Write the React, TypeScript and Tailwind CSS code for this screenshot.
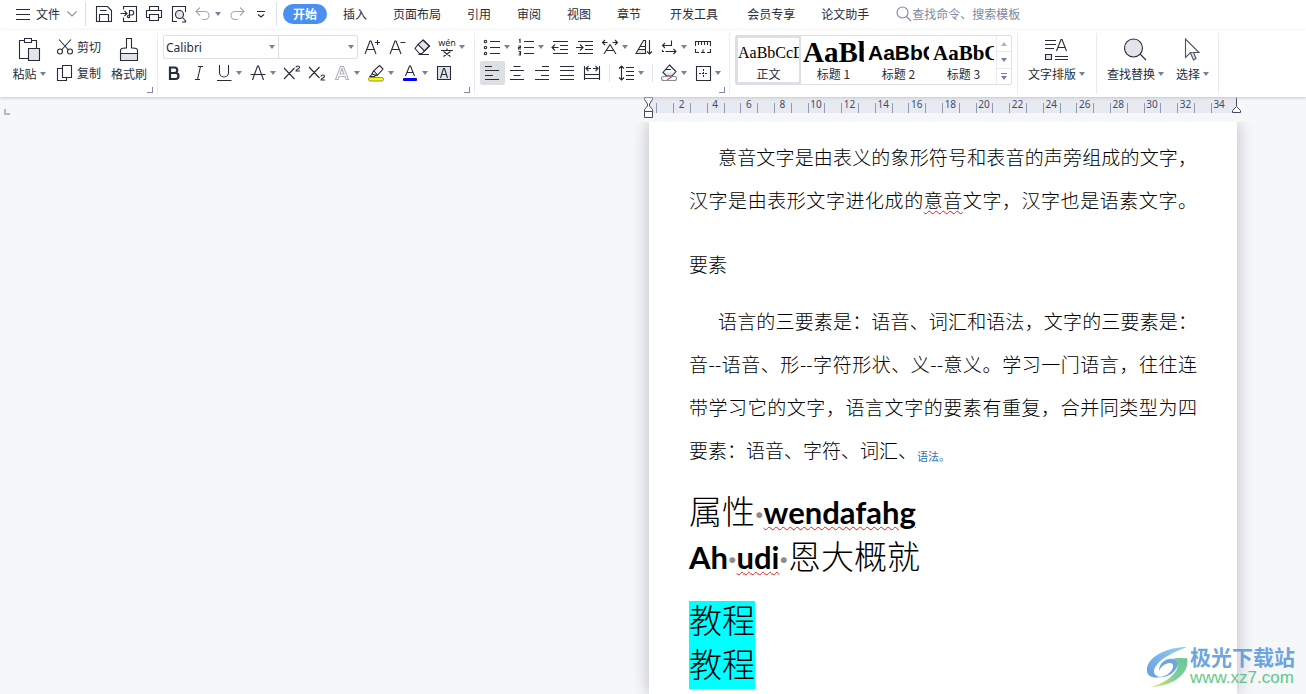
import React from "react"

type IconProps = {
    children: React.ReactNode
    size?: number
    className?: string
}

const Icon = ({ children, size = 18, className = "" }: IconProps) => (
    <svg
        width={size}
        height={size}
        viewBox={`0 0 ${size} ${size}`}
        fill="none"
        stroke="currentColor"
        strokeWidth="1.1"
        className={`shrink-0 ${className}`}
        aria-hidden="true"
    >
        {children}
    </svg>
)

const Caret = ({ className = "" }: { className?: string }) => (
    <svg width="6" height="4" viewBox="0 0 6 4" className={`shrink-0 fill-[#7480a0] ${className}`} aria-hidden="true">
        <path d="M0 0h6L3 4z" />
    </svg>
)

const Separator = () => <div className="my-[3px] w-px shrink-0 bg-[#e9ebef]" />

const Launcher = () => (
    <button aria-label="更多设置" className="block size-[6px] border-r border-b border-[#7e8ba8]" />
)

type ToolProps = {
    label: string
    children: React.ReactNode
    menu?: boolean
    active?: boolean
}

const Tool = ({ label, children, menu, active }: ToolProps) => (
    <button
        aria-label={label}
        className={`flex h-6 shrink-0 items-center rounded-xs pl-[3px] ${menu ? "w-[34px] gap-[3px]" : "w-[25px]"} ${active ? "bg-[#dce0e4]" : ""}`}
    >
        {children}
        {menu && <Caret />}
    </button>
)

const tabs = ["插入", "页面布局", "引用", "审阅", "视图", "章节"]
const extraTabs = ["开发工具", "会员专享"]

const TitleBar = () => (
    <header className="flex h-[30px] items-center pb-0.5 pl-[15px]">
        <button className="flex items-center">
            <Icon size={16}><path d="M1 3.500h14M1 8.500h14M1 13.500h14" /></Icon>
            <span className="ml-[5px]">文件</span>
            <Icon size={10} className="ml-[7px] text-[#8a8f99]"><path d="M.5 2.500l4.500 4.500 4.500-4.500" /></Icon>
        </button>
        <div className="ml-2 h-6 w-px bg-[#dcdfe5]" />
        <div className="ml-[9px] flex w-[181px] items-center">
            <button aria-label="保存" className="w-[25px]">
                <Icon><path d="M1.500 1.500h11l4 4v11h-15zM4.500 16.500v-7h9v7M5 5.500h6.500" /></Icon>
            </button>
            <button aria-label="输出为PDF" className="w-[25px]">
                <Icon><path d="M3.500 4.500v-3h13v15h-13v-4M.500 8.500h6M4.500 6l2.500 2.500L4.500 11M9.500 13V5.500h2c3 0 3 4.500 0 4.500H9c-1.500 0-2 2-1 2.500s1.500-.5 1.500-1.500" /></Icon>
            </button>
            <button aria-label="打印" className="w-[25px]">
                <Icon><path d="M4.500 5.500v-4h9v4M4.500 12.500h-3v-7h15v7h-3M4.500 9.500h9v6h-9z" /></Icon>
            </button>
            <button aria-label="打印预览" className="w-[25px]">
                <Icon>
                    <path d="M7 16.500H2.500v-15h13V7M15.500 15.500v1.500H12" />
                    <circle cx="9.500" cy="9.500" r="4" fill="#e2e4e9" />
                    <path d="M12.500 12.500l3.500 4" />
                </Icon>
            </button>
            <button aria-label="撤销" className="flex w-[34px] items-center text-[#a5a9b1]">
                <Icon><path d="M5 2.500l-4 4 4 4M1 6.500h9a4 4 0 010 8H7" /></Icon>
                <Caret className="ml-[2px]" />
            </button>
            <button aria-label="恢复" className="w-[26px] text-[#a5a9b1]">
                <Icon><path d="M11 2.500l4 4-4 4M15 6.500H6a4 4 0 000 8h3" /></Icon>
            </button>
            <button aria-label="自定义快速访问工具栏">
                <Icon size={10} className="ml-px"><path d="M1 2.500h8M2 5.500l3 2.500 3-2.500" /></Icon>
            </button>
        </div>
        <div className="h-6 w-px bg-[#dcdfe5]" />
        <nav className="ml-[6px] flex items-center">
            <button className="h-5 w-11 rounded-full bg-[#4a90f3] font-bold text-white">开始</button>
            <div className="ml-[3px] flex">
                {tabs.map((tab) => (
                    <button key={tab} className="px-[13px]">{tab}</button>
                ))}
            </div>
            {extraTabs.map((tab) => (
                <button key={tab} className="ml-[3px] px-[13px]">{tab}</button>
            ))}
            <button className="px-[13px]">论文助手</button>
        </nav>
        <label className="ml-[14px] flex items-center text-[#7d88a3]">
            <Icon size={16}>
                <circle cx="6.500" cy="6.500" r="5.500" />
                <path d="M10.500 10.500l4.500 4.500" />
            </Icon>
            <input
                aria-label="搜索"
                placeholder="查找命令、搜索模板"
                className="w-32 bg-transparent outline-none placeholder:text-[#7d88a3]"
            />
        </label>
    </header>
)

const ClipboardGroup = () => (
    <div className="flex h-[67px] w-[157px] shrink-0 pt-[5px]">
        <button className="ml-3 flex w-[34px] flex-col items-center">
            <Icon size={24} className="mt-[2px]">
                <path d="M7.500 3.500h-5v18h9M14.500 3.500h5v9M7.500 1.500h7v4h-7z" />
                <path d="M11.500 11.500h11v12h-11z" fill="#e2e4e9" />
            </Icon>
            <span className="mt-1 flex items-center gap-[3px] leading-[18px] whitespace-nowrap">粘贴<Caret /></span>
        </button>
        <div className="ml-[10px] flex w-[46px] flex-col gap-[2px]">
            <button className="flex h-6 items-center gap-[3px] whitespace-nowrap">
                <Icon>
                    <path d="M3 1.500l9.500 10.500M15 1.500L5.500 12" />
                    <circle cx="4" cy="13.500" r="2.500" />
                    <circle cx="14" cy="13.500" r="2.500" />
                </Icon>
                剪切
            </button>
            <button className="flex h-6 items-center gap-[3px] whitespace-nowrap">
                <Icon><path d="M6.500 1.500h9v12h-9zM6.500 4.500h-5v12h9v-3" /></Icon>
                复制
            </button>
        </div>
        <button className="ml-[9px] flex w-9 flex-col items-center whitespace-nowrap">
            <Icon size={24} className="mt-[2px]">
                <path d="M3.500 16.500h17v7h-17z" fill="#e2e4e9" />
                <path d="M3.500 16.500v-3c0-2 1-2 6-2.500V1.500h5V11c5 .5 6 .5 6 2.500v3" />
            </Icon>
            <span className="mt-1 leading-[18px]">格式刷</span>
        </button>
        <div className="mb-[4px] flex items-end"><Launcher /></div>
    </div>
)

const FontGroup = () => (
    <div className="w-[316px] shrink-0 pt-[5px] pl-1">
        <div className="flex">
            <div className="ml-px flex h-6 w-[195px] rounded-xs border border-[#dcdfe5]">
                <label className="flex w-[115px] items-center border-r border-[#dcdfe5]">
                    <select
                        aria-label="字体"
                        className="min-w-0 flex-1 appearance-none pt-px pl-[2px] font-['Noto_Sans','Noto_Sans_CJK_SC',sans-serif] text-[12px] outline-none"
                    >
                        <option>Calibri</option>
                    </select>
                    <Caret className="mr-[3px]" />
                </label>
                <label className="flex flex-1 items-center">
                    <select aria-label="字号" className="min-w-0 flex-1 appearance-none outline-none">
                        <option></option>
                    </select>
                    <Caret className="mr-[3px]" />
                </label>
            </div>
            <div className="ml-[2px] flex">
                <Tool label="增大字号">
                    <Icon><path d="M2 16L7 3h1l5 13M4 11.500h7M12 4.500h5M14.500 2v5" /></Icon>
                </Tool>
                <Tool label="减小字号">
                    <Icon><path d="M2 16L7 3h1l5 13M4 11.500h7M12.500 4.500h5" /></Icon>
                </Tool>
                <Tool label="清除格式">
                    <Icon>
                        <path d="M10 2l6.500 6-5 5L5 6.500z" fill="#e2e4e9" />
                        <path d="M10 2l6.500 6-7.500 7.500H6.500L2 10.500 5 6.500M5.500 16.500H16" />
                    </Icon>
                </Tool>
                <Tool label="拼音指南" menu>
                    <span className="flex w-[18px] flex-col items-center">
                        <span className="font-['Noto_Sans',sans-serif] text-[9px] leading-[11px]">wén</span>
                        <svg width="12" height="9" viewBox="0 0 12 9" fill="none" stroke="currentColor" strokeWidth="1.2" aria-hidden="true">
                            <path d="M0 2.500h12M6 .5v2M2.500 3.500l7 5M9.500 3.500l-7 5" />
                        </svg>
                    </span>
                </Tool>
            </div>
        </div>
        <div className="mt-[2px] flex">
            <Tool label="加粗">
                <Icon><path d="M5 3.500h4.500a2.750 2.750 0 010 5.500H5zM5 9h5.500a3 3 0 010 6H5z" strokeWidth="2.200" /></Icon>
            </Tool>
            <Tool label="倾斜">
                <Icon><path d="M8 2.500h5M5 15.500h5M10.500 2.500l-3 13" /></Icon>
            </Tool>
            <Tool label="下划线" menu>
                <Icon><path d="M4.500 1v7.500a4.500 4.500 0 009 0V1M2 16.500h14.500" /></Icon>
            </Tool>
            <Tool label="删除线" menu>
                <Icon><path d="M3.500 16L8.500 2h1l5 14M1.500 10.500h15" /></Icon>
            </Tool>
            <Tool label="上标">
                <Icon><path d="M1 4l10.500 11M11.500 4L1 15M13 3.500c0-2 3.500-2 3.500 0 0 1.200-3.500 2-3.500 3.500h4" /></Icon>
            </Tool>
            <Tool label="下标">
                <Icon><path d="M1 3l10.500 11M11.500 3L1 14M13 12.500c0-2 3.500-2 3.500 0 0 1.200-3.500 2-3.500 3.500h4" /></Icon>
            </Tool>
            <Tool label="文字效果" menu>
                <Icon className="text-[#b0b3b9]"><path d="M2.500 15.500l5-13h3l5 13H13l-1-3H6l-1 3zM7 10h4L9 4.500z" /></Icon>
            </Tool>
            <Tool label="突出显示" menu>
                <Icon>
                    <path d="M12.500 1.500l3.500 3.500-6 6.500-5-1.500 1.500-3zM5 10l-2 2.500h4.500L9 11M7 7l3.500 4" />
                    <rect x="1.500" y="13.500" width="15" height="3.500" rx="1.700" fill="#ffff00" stroke="#8a8a60" strokeWidth="1" />
                </Icon>
            </Tool>
            <Tool label="字体颜色" menu>
                <Icon>
                    <path d="M4.500 12L8.500 2h1l4 10M6 8.500h6" />
                    <rect x="2" y="14" width="14" height="3" rx="1" fill="#0000ff" stroke="none" />
                </Icon>
            </Tool>
            <Tool label="字符底纹">
                <Icon>
                    <path d="M2.500 2.500h13v13h-13z" fill="#e2e4e9" />
                    <path d="M5.500 14l3-9.500h1l3 9.500M6.500 10.500h5" />
                </Icon>
            </Tool>
        </div>
        <div className="mt-[2px] mr-[4px] flex justify-end"><Launcher /></div>
    </div>
)

const ParagraphGroup = () => (
    <div className="w-[254px] shrink-0 pt-[5px] pl-[5px]">
        <div className="flex">
            <Tool label="项目符号" menu>
                <Icon>
                    <path d="M7 3.500h10M7 9.500h10M7 15.500h10" />
                    <circle cx="2.500" cy="3.500" r="1.200" />
                    <circle cx="2.500" cy="9.500" r="1.200" />
                    <circle cx="2.500" cy="15.500" r="1.200" />
                </Icon>
            </Tool>
            <Tool label="编号" menu>
                <Icon>
                    <path d="M7 3.500h10M7 9.500h10M7 15.500h10" />
                    <path d="M2 2l1-.5V5M1.500 8h2v1.500h-2V11h2.500M1.500 13.500h2v3.500h-2M2 15.200h1.500" />
                </Icon>
            </Tool>
            <Tool label="减少缩进量">
                <Icon><path d="M2 3.500h15M9 7.500h8M9 11.500h8M2 15.500h15M7.500 9.500H1M4 6.500l-3 3 3 3" /></Icon>
            </Tool>
            <Tool label="增加缩进量">
                <Icon><path d="M2 3.500h15M9 7.500h8M9 11.500h8M2 15.500h15M0 9.500h7M4 6.500l3 3-3 3" /></Icon>
            </Tool>
            <Tool label="中文版式" menu>
                <Icon><path d="M1.500 4.500h5M4 2L1.500 4.500 4 7M11.500 4.500h5M14 2l2.500 2.500L14 7M3 16l6-9.500L15 16M5.500 12.500h7" /></Icon>
            </Tool>
            <Tool label="排序">
                <Icon>
                    <path d="M4 11h6v4.500H2z" fill="#e2e4e9" stroke="none" />
                    <path d="M1 15.500L8.500 2.500h2v13zM5 8.500h5.500M3.500 11.500h7M14.500 2v14M12 13.500l2.500 2.500 2.500-2.500" />
                </Icon>
            </Tool>
            <Tool label="换行符" menu>
                <Icon><path d="M11.500 2.500v5H2.500M5 5L2.500 7.500 5 10M5.500 13.500H16M13.500 11l2.500 2.500L13.500 16M2.500 12v1.500H4" /></Icon>
            </Tool>
            <Tool label="标尺">
                <Icon><path d="M1.500 8V3.500h15V8M4.500 3.500V7M7.500 3.500V7M10.500 3.500V7M13.500 3.500V7M1.500 11v3.500H5M16.500 11v3.500H13M7 14.500h4M9 11.500v3" /></Icon>
            </Tool>
        </div>
        <div className="mt-[2px] flex">
            <Tool label="左对齐" active>
                <Icon><path d="M2 2.500h7M2 6.500h14M2 11.500h8M2 15.500h14" /></Icon>
            </Tool>
            <Tool label="居中">
                <Icon><path d="M5.500 2.500h7M2 6.500h14M5.500 11.500h7M2 15.500h14" /></Icon>
            </Tool>
            <Tool label="右对齐">
                <Icon><path d="M9 2.500h7M2 6.500h14M8 11.500h8M2 15.500h14" /></Icon>
            </Tool>
            <Tool label="两端对齐">
                <Icon><path d="M2 2.500h14M2 6.500h14M2 11.500h14M2 15.500h14" /></Icon>
            </Tool>
            <Tool label="分散对齐">
                <Icon><path d="M1.500 2v14M16.500 2v14M3 4.500h5M5.500 2L3 4.500 5.500 7M10 4.500h5M12.500 2L15 4.500 12.500 7M2 10.500h14M2 14.500h14" /></Icon>
            </Tool>
            <div className="mx-1 my-[3px] w-px bg-[#dfe2e8]" />
            <Tool label="行距" menu>
                <Icon><path d="M4.500 2v14M2 4.500L4.500 2 7 4.500M2 13.500L4.500 16 7 13.500M9 3.500h8M9 7.500h8M9 11.500h8M9 15.500h8" /></Icon>
            </Tool>
            <div className="mx-1 my-[3px] w-px bg-[#dfe2e8]" />
            <Tool label="底纹颜色" menu>
                <Icon>
                    <path d="M4 8.500h12l-3.500 3.500h-6z" fill="#e2e4e9" stroke="none" />
                    <path d="M9.500 1L16 7.500l-4 4.500H6.500L3 8.500zM5 5.500h6" />
                    <rect x="1.500" y="12.500" width="15" height="4" rx="2" fill="#fff" stroke="#8a8d94" />
                    <path d="M7 16l5-3.500" stroke="#e05050" />
                </Icon>
            </Tool>
            <Tool label="边框" menu>
                <Icon><path d="M2.500 2.500h14v14h-14z" /><path d="M5 9.500h9M9.500 5v9" strokeDasharray="2 1" /></Icon>
            </Tool>
        </div>
        <div className="mt-[2px] mr-[4px] flex justify-end"><Launcher /></div>
    </div>
)

type StyleItem = {
    name: string
    sample: string
    font: string
}

const styleItems: StyleItem[] = [
    { name: "正文", sample: "AaBbCcDd", font: "font-['Liberation_Serif',serif] text-[16px]" },
    { name: "标题 1", sample: "AaBb", font: "font-['Liberation_Serif',serif] text-[29px] font-bold" },
    { name: "标题 2", sample: "AaBbC", font: "font-['Liberation_Sans',sans-serif] text-[21px] font-bold" },
    { name: "标题 3", sample: "AaBbC", font: "font-['Liberation_Serif',serif] text-[21px] font-bold" },
]

const StylesGroup = () => (
    <div className="w-[287px] shrink-0 pt-[5px] pl-[5px]">
        <div className="flex h-[50px] w-[277px] rounded-xs border border-[#dcdfe5]">
            {styleItems.map((item, i) => (
                <button
                    key={item.name}
                    className={`flex w-[65px] flex-col border-2 ${i === 0 ? "border-[#dcdfe5]" : "border-transparent"}`}
                >
                    <span className={`flex h-7 w-full items-center overflow-hidden pt-px whitespace-nowrap text-black ${item.font}`}>
                        {item.sample}
                    </span>
                    <span className="w-full text-center leading-[16px]">{item.name}</span>
                </button>
            ))}
            <div className="flex flex-1 flex-col divide-y divide-[#e9ebef] border-l border-[#e9ebef]">
                <button aria-label="上一行" className="flex flex-1 items-center justify-center">
                    <Caret className="rotate-180 opacity-60" />
                </button>
                <button aria-label="下一行" className="flex flex-1 items-center justify-center"><Caret /></button>
                <button aria-label="更多样式" className="flex flex-1 flex-col items-center justify-center gap-[2px]">
                    <span className="h-px w-[6px] bg-[#7480a0]" />
                    <Caret />
                </button>
            </div>
        </div>
    </div>
)

type BigToolProps = {
    label: string
    children: React.ReactNode
}

const BigTool = ({ label, children }: BigToolProps) => (
    <button className="flex flex-col pt-[7px]">
        <span className="flex pl-1">{children}</span>
        <span className="mt-1 flex items-center gap-[3px] leading-[18px] whitespace-nowrap">
            {label}
            <Caret />
        </span>
    </button>
)

const Ribbon = () => (
    <div className="relative z-10 flex h-[67px] bg-white shadow-[0_1px_3px_#c4c8d0]">
        <ClipboardGroup />
        <Separator />
        <FontGroup />
        <Separator />
        <ParagraphGroup />
        <Separator />
        <StylesGroup />
        <Separator />
        <div className="flex w-[78px] shrink-0 pl-[10px]">
            <BigTool label="文字排版">
                <Icon size={24} className="ml-3">
                    <path d="M1 3.500h11M1 7.500h11M1 11.500h9M11 19.500h13M11 22.500h13M12.500 14L17 2.500h1L22.500 14M14 10.500h7" />
                    <path d="M1.500 17.500h6v5h-6z" fill="#e2e4e9" />
                </Icon>
            </BigTool>
        </div>
        <Separator />
        <div className="flex w-[121px] shrink-0 gap-3 pl-[10px]">
            <BigTool label="查找替换">
                <Icon size={24} className="ml-3">
                    <circle cx="10.500" cy="11" r="9" fill="#e2e4e9" />
                    <path d="M17 17l6 6" />
                </Icon>
            </BigTool>
            <BigTool label="选择">
                <Icon size={24} className="text-[#4a5060]">
                    <path d="M5.500 2v18.500l5-5h8.500z" />
                    <path d="M10.500 16l3 7 2.500-1.500-2.500-6" fill="#e2e4e9" />
                </Icon>
            </BigTool>
        </div>
        <Separator />
    </div>
)

const Ruler = () => (
    <div className="flex h-[25px] justify-end pr-[70px]">
        <div className="relative flex h-4 w-[588px] bg-[#e7eaf1]">
            <div className="flex-1" />
            {Array.from({ length: 34 }, (_, i) => i + 1).map((n) => (
                <div key={n} className="flex min-w-0 flex-2 items-end">
                    <div className="h-[10px] w-px shrink-0 bg-[#8f9bb3]" />
                    {n % 2 === 0 && (
                        <span className="flex-1 pr-px text-center font-['Noto_Sans',sans-serif] text-[10px] leading-[17px] text-[#3f4b66]">
                            {n}
                        </span>
                    )}
                </div>
            ))}
            <div className="flex-1" />
            <svg width="11" height="22" viewBox="0 0 11 22" fill="#fff" stroke="#3f4b66" className="absolute top-0 -left-[5px]">
                <path d="M1.500.5h8v2L6.500 7v2l3 3.500v2h-8v-2l3-3.500V7l-3-4.500zM1.500 14.500h8v6h-8z" />
            </svg>
            <svg width="11" height="16" viewBox="0 0 11 16" fill="#fff" stroke="#3f4b66" className="absolute top-0 -right-[6px]">
                <path d="M5.500 0v9M5.500 9.500l4 4v2h-8v-2z" />
            </svg>
        </div>
    </div>
)

const Dot = () => <span className="font-['Lato',sans-serif] text-[31px] font-bold text-[#8c8c8c]">·</span>

const wavy = "underline decoration-[#e02020] decoration-wavy decoration-1 underline-offset-2"

const Paper = () => (
    <article className="w-[588px] shrink-0 bg-white px-10 text-[19px] leading-[43px] font-light text-black shadow-[0_0_16px_#b9babd]">
        <p className="mt-[13px] indent-[29px] text-justify [text-align-last:justify]">
            意音文字是由表义的象形符号和表音的声旁组成的文字，汉字是由表形文字进化成的<span className={wavy}>意音</span>文字，汉字也是语素文字。
        </p>
        <p className="mt-[21px]">要素</p>
        <p className="mt-[14px] indent-[29px] text-justify">
            语言的三要素是：语音、词汇和语法，文字的三要素是：音--语音、形--字符形状、义--意义。学习一门语言，往往连带学习它的文字，语言文字的要素有重复，合并同类型为四要素：语音、字符、词汇、<sub className="text-[11px] leading-none font-normal text-[#2e74b5]">语法。</sub>
        </p>
        <h1 className="mt-[18px] text-[33px] font-light">
            属性<Dot /><span className={`font-['Lato',sans-serif] text-[31px] font-bold ${wavy}`}>wendafahg</span>
        </h1>
        <h1 className="text-[33px] font-light">
            <span className="font-['Lato',sans-serif] text-[31px] font-bold">Ah<Dot /><span className={wavy}>udi</span></span><Dot />恩大概就
        </h1>
        <div className="mt-[22px] text-[33px]">
            <p><mark className="block w-fit bg-[#00ffff] pb-2 leading-9">教程</mark></p>
            <p><mark className="block w-fit bg-[#00ffff] pb-2 leading-9">教程</mark></p>
        </div>
    </article>
)

const Watermark = () => (
    <div className="absolute right-[11px] bottom-[6px] flex items-center gap-[2px] opacity-80">
        <svg width="42" height="42" viewBox="0 0 42 42" aria-hidden="true">
            <defs>
                <linearGradient id="swooshTop" x1="1" y1="0" x2="0" y2="1">
                    <stop offset="0" stopColor="#7cc4ee" />
                    <stop offset="1" stopColor="#3f86d8" />
                </linearGradient>
                <linearGradient id="swooshBottom" x1="1" y1="0" x2="0" y2="1">
                    <stop offset="0" stopColor="#45b97c" />
                    <stop offset=".5" stopColor="#5cc480" />
                    <stop offset="1" stopColor="#e6e04a" />
                </linearGradient>
            </defs>
            <path d="M41 1C22 1 3 10 1 22c-1 7 4 11 13 9-6-1-8-6-4-11C15 12 28 6 41 1z" fill="url(#swooshTop)" />
            <path d="M12 31c8 0 14-5 15-10 1-4-3-5-7-3-3 1-6 4-7 7 0-8 7-13 14-12 6 1 6 6 3 10-4 6-11 9-18 8z" fill="#4a8fd8" />
            <path d="M41 12c3 13-10 28-37 29 13-3 23-10 27-18 2-5 1-9-4-10 5-2 9 0 14-1z" fill="url(#swooshBottom)" />
        </svg>
        <div className="flex flex-col">
            <span className="text-[21px] leading-[23px] font-bold text-[#4a90d9]">极光下载站</span>
            <span className="font-['Liberation_Sans',sans-serif] text-[17px] leading-[20px] text-[#3dbb6c]">www.xz7.com</span>
        </div>
    </div>
)

const App = () => (
    <div
        lang="zh-CN"
        className="relative flex min-h-screen flex-col overflow-hidden bg-[#f5f7f9] font-['Noto_Sans_CJK_SC',sans-serif] text-xs text-[#262c3a]"
    >
        <div className="bg-white"><TitleBar /></div>
        <Ribbon />
        <main className="relative flex flex-1 flex-col">
            <div className="absolute top-3 left-1 size-[6px] border-b-2 border-l-2 border-[#b4b9c3]" />
            <Ruler />
            <div className="flex flex-1 justify-end overflow-hidden pr-[69px]">
                <Paper />
            </div>
        </main>
        <Watermark />
    </div>
)

export default App
